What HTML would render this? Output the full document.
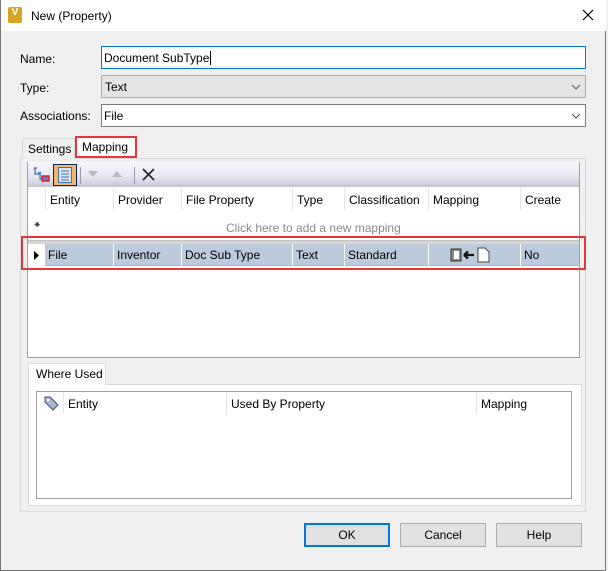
<!DOCTYPE html>
<html><head><meta charset="utf-8"><style>
*{box-sizing:border-box;margin:0;padding:0}
body{width:608px;height:571px;overflow:hidden;background:#f0f0f0;font-family:"Liberation Sans",sans-serif;font-size:12px;color:#000;position:relative}
.a{position:absolute}
.win{left:0;top:0;width:606px;height:571px;border:1px solid #777;border-top:none;background:#f0f0f0}
.t{white-space:nowrap}
.hc{border-right:1px solid #e6e6e6;height:22px;top:0;padding:5px 4px 0}
.dc{border-right:1px solid #fff;padding:4px 3px 0;height:22px;top:0}
.btn{border:1px solid #adadad;background:#e1e1e1;text-align:center;line-height:22px;font-size:12px}
</style></head><body>
<div class="a win"></div>
<div class="a" style="left:1px;top:0;width:605px;height:31px;background:#fff"></div>
<div class="a" style="left:8px;top:7px;width:14px;height:16px;background:#d9a520;border-radius:2px;color:#fff;font-size:10px;font-weight:bold;text-align:center;line-height:12px">V</div>
<div class="a t" style="left:31px;top:9px;font-size:12px">New (Property)</div>
<svg class="a" style="left:582px;top:9px" width="12" height="12"><path d="M1 1L11 11M11 1L1 11" stroke="#000" stroke-width="1.2"/></svg>

<div class="a t" style="left:20px;top:52px">Name:</div>
<div class="a t" style="left:20px;top:81px">Type:</div>
<div class="a t" style="left:20px;top:109px">Associations:</div>
<div class="a" style="left:101px;top:46px;width:485px;height:23px;background:#fff;border:1px solid #0078d7"></div>
<div class="a t" style="left:104px;top:51px">Document SubType<span style="border-left:1px solid #000;margin-left:1px"></span></div>
<div class="a" style="left:101px;top:75px;width:485px;height:23px;background:#e5e5e5;border:1px solid #adadad"></div>
<div class="a t" style="left:105px;top:80px">Text</div>
<div class="a" style="left:101px;top:104px;width:485px;height:23px;background:#fff;border:1px solid #7a7a7a"></div>
<div class="a t" style="left:104px;top:109px">File</div>
<svg class="a" style="left:571px;top:84px" width="10" height="6"><path d="M1 1L5 5L9 1" stroke="#555" fill="none"/></svg>
<svg class="a" style="left:571px;top:113px" width="10" height="6"><path d="M1 1L5 5L9 1" stroke="#555" fill="none"/></svg>

<div class="a" style="left:20px;top:158px;width:566px;height:354px;border:1px solid #d9d9d9;background:#f0f0f0"></div>
<div class="a" style="left:22px;top:138px;width:53px;height:21px;border:1px solid #d9d9d9;border-bottom:none;background:#f0f0f0"></div>
<div class="a t" style="left:28px;top:142px">Settings</div>
<div class="a" style="left:75px;top:136px;width:62px;height:22px;border:2px solid #e8363c;background:#fff"></div>
<div class="a t" style="left:82px;top:140px">Mapping</div>

<div class="a" style="left:27px;top:162px;width:553px;height:196px;border:1px solid #a0a0a0;background:#fff"></div>
<div class="a" style="left:28px;top:162px;width:551px;height:25px;background:linear-gradient(#f7f7fb,#e6e6f0 60%,#c4c4d8)"></div>
<svg class="a" style="left:32px;top:166px" width="18" height="16"><path d="M2 2h3M3 2v6h4M8 8v5h3" stroke="#2050a0" fill="none"/><rect x="10" y="10" width="7" height="5" fill="#4a80d0" stroke="#e02020" stroke-width="1.5"/><rect x="6" y="6" width="3" height="3" fill="#4a80d0"/></svg>
<div class="a" style="left:53px;top:164px;width:24px;height:22px;border:1px solid #0a246a;background:#f6b56a"></div>
<div class="a" style="left:58px;top:167px;width:14px;height:16px;background:#dbe6f5;border:1px solid #4070b0"></div>
<svg class="a" style="left:60px;top:170px" width="10" height="12"><path d="M1 1h8M1 4h8M1 7h8M1 10h8" stroke="#4070b0"/></svg>
<div class="a" style="left:80px;top:167px;width:1px;height:17px;background:#9a9ab0"></div>
<svg class="a" style="left:87px;top:170px" width="12" height="8"><path d="M1 1h10L6 7z" fill="#b8b8c4"/></svg>
<svg class="a" style="left:111px;top:170px" width="12" height="8"><path d="M1 7h10L6 1z" fill="#b8b8c4"/></svg>
<div class="a" style="left:134px;top:167px;width:1px;height:17px;background:#9a9ab0"></div>
<svg class="a" style="left:142px;top:168px" width="13" height="13"><path d="M1 1L12 12M12 1L1 12" stroke="#222" stroke-width="1.6"/></svg>

<div class="a" style="left:28px;top:188px;width:551px;height:24px">
<div class="a hc" style="left:0;width:18px"></div>
<div class="a hc t" style="left:18px;width:68px">Entity</div>
<div class="a hc t" style="left:86px;width:68px">Provider</div>
<div class="a hc t" style="left:154px;width:111px">File Property</div>
<div class="a hc t" style="left:265px;width:52px">Type</div>
<div class="a hc t" style="left:317px;width:84px">Classification</div>
<div class="a hc t" style="left:401px;width:92px">Mapping</div>
<div class="a hc t" style="left:493px;width:58px;border:none">Create</div>
</div>
<div class="a" style="left:33px;top:220px;font-size:10px;color:#333">⁕</div>
<div class="a t" style="left:226px;top:221px;color:#8a8a8a">Click here to add a new mapping</div>
<div class="a" style="left:28px;top:240px;width:551px;height:4px;background:#d6d6d6;border-top:1px solid #c0c0c0"></div>
<div class="a" style="left:28px;top:244px;width:551px;height:22px;background:#fff">
<svg class="a" style="left:6px;top:7px" width="6" height="9"><path d="M0 0L5 4.5L0 9z" fill="#000"/></svg>
<div class="a" style="left:17px;top:0;width:534px;height:22px;background:#bccbdb;border-bottom:1px solid #a8b4c0"></div>
<div class="a dc t" style="left:17px;width:69px">File</div>
<div class="a dc t" style="left:86px;width:68px">Inventor</div>
<div class="a dc t" style="left:154px;width:111px">Doc Sub Type</div>
<div class="a dc t" style="left:265px;width:52px">Text</div>
<div class="a dc t" style="left:317px;width:84px">Standard</div>
<div class="a dc" style="left:401px;width:92px"></div>
<div class="a dc t" style="left:493px;width:58px;border:none">No</div>
<svg class="a" style="left:420px;top:3px" width="52" height="16"><rect x="3" y="2" width="10" height="12" fill="#888" stroke="#333"/><rect x="6" y="4" width="5" height="8" fill="#fff"/><path d="M16 8h10M16 8l4-3.5M16 8l4 3.5" stroke="#111" stroke-width="2.2" fill="none"/><path d="M30 1h7l4 4v10H30z" fill="#fff" stroke="#444"/></svg>
</div>
<div class="a" style="left:21px;top:236px;width:565px;height:34px;border:2px solid #e8363c"></div>

<div class="a" style="left:28px;top:384px;width:554px;height:122px;border:1px solid #d9d9d9;background:#fff"></div>
<div class="a" style="left:28px;top:363px;width:78px;height:22px;border:1px solid #d9d9d9;border-bottom:none;background:#fff"></div>
<div class="a t" style="left:36px;top:367px">Where Used</div>
<div class="a" style="left:36px;top:391px;width:536px;height:108px;border:1px solid #a0a0a0;background:#fff"></div>
<div class="a" style="left:37px;top:392px;width:534px;height:23px">
<div class="a hc" style="left:0;width:27px"></div>
<svg class="a" style="left:6px;top:3px" width="16" height="16"><path d="M2 2l5 0 8 8-5 5-8-8z" fill="#a8b8d0" stroke="#405070"/><circle cx="5" cy="5" r="1.3" fill="#fff"/></svg>
<div class="a hc t" style="left:27px;width:163px">Entity</div>
<div class="a hc t" style="left:190px;width:250px">Used By Property</div>
<div class="a hc t" style="left:440px;width:94px;border:none">Mapping</div>
</div>

<div class="a btn" style="left:304px;top:523px;width:86px;height:24px;border:2px solid #0078d7;line-height:20px">OK</div>
<div class="a btn" style="left:400px;top:523px;width:86px;height:24px">Cancel</div>
<div class="a btn" style="left:496px;top:523px;width:86px;height:24px">Help</div>
</body></html>
